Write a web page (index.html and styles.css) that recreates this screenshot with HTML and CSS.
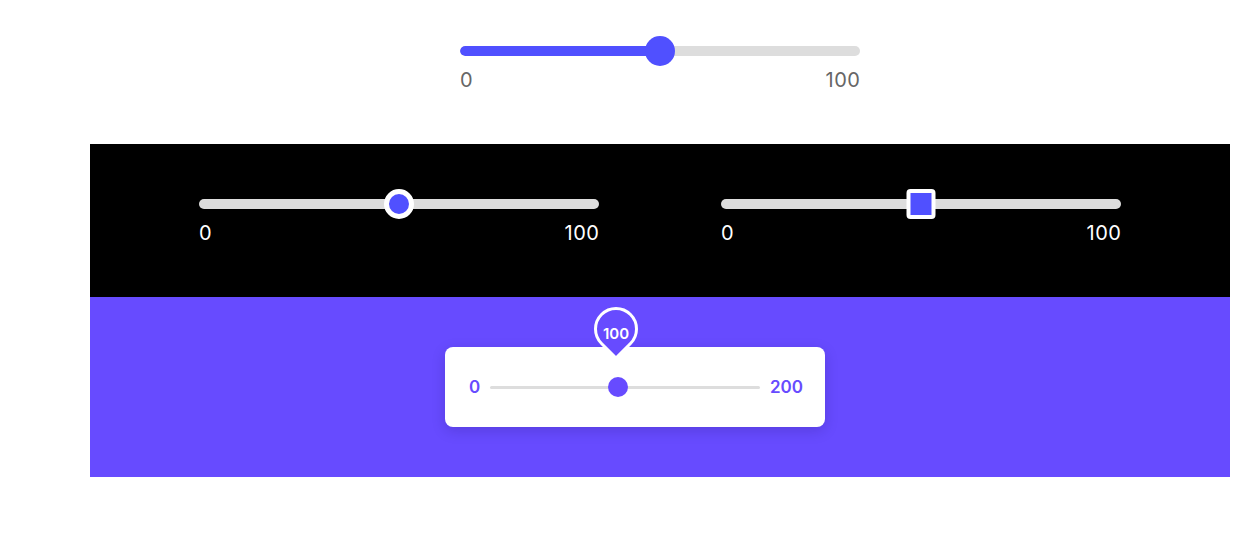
FILE: index.html
```html
<!DOCTYPE html>
<html lang="en">
<head>
<meta charset="utf-8">
<title>Range sliders</title>
<link rel="stylesheet" href="styles.css">
</head>
<body>
<main class="page">
  <section class="top">
    <div class="range">
      <div class="slider">
        <div class="track"><div class="fill" style="width:50%"></div></div>
        <span class="thumb thumb-solid" style="left:50%"></span>
      </div>
      <div class="labels labels-gray"><span>0</span><span>100</span></div>
    </div>
  </section>

  <section class="dark">
    <div class="range">
      <div class="slider">
        <div class="track"></div>
        <span class="thumb thumb-ring" style="left:50%"></span>
      </div>
      <div class="labels labels-white"><span>0</span><span>100</span></div>
    </div>
    <div class="range">
      <div class="slider">
        <div class="track"></div>
        <span class="thumb thumb-square" style="left:50%"></span>
      </div>
      <div class="labels labels-white"><span>0</span><span>100</span></div>
    </div>
  </section>

  <section class="purple">
    <div class="card">
      <span class="card-label">0</span>
      <div class="card-track">
        <span class="card-thumb" style="left:47.4%">
          <span class="pin"></span>
          <span class="pin-text">100</span>
        </span>
      </div>
      <span class="card-label">200</span>
    </div>
  </section>
</main>
</body>
</html>
```

FILE: styles.css
```css
html, body {
  margin: 0;
  padding: 0;
  background: #ffffff;
}

body {
  font-family: Inter, "Open Sans", sans-serif;
  width: 1260px;
  height: 536px;
  overflow: hidden;
}

.page {
  display: flex;
  flex-direction: column;
}

.top {
  height: 144px;
  box-sizing: border-box;
  padding: 36px 0 0 460px;
}

.range {
  width: 400px;
  display: flex;
  flex-direction: column;
}

.slider {
  position: relative;
  height: 30px;
  display: flex;
  align-items: center;
}

.track {
  position: relative;
  width: 100%;
  height: 10px;
  border-radius: 5px;
  background: #dddddd;
  overflow: hidden;
}

.fill {
  height: 100%;
  background: #5050ff;
  border-radius: 5px 0 0 5px;
}

.thumb {
  position: absolute;
  top: 0;
  width: 30px;
  height: 30px;
  box-sizing: border-box;
  transform: translateX(-50%);
  background: #5050ff;
}

.thumb-solid {
  border-radius: 50%;
}

.thumb-ring {
  border-radius: 50%;
  border: 5px solid #ffffff;
}

.thumb-square {
  width: 29px;
  border-radius: 4px;
  border: 4.5px solid #ffffff;
}

.labels {
  display: flex;
  justify-content: space-between;
  margin-top: 4px;
  font-size: 20px;
  line-height: 20px;
  font-weight: 400;
  letter-spacing: 0.6px;
}

.labels span:last-child {
  margin-right: -0.6px;
}

.labels-gray {
  color: #666666;
}

.labels-white {
  color: #ffffff;
}

.dark {
  margin-left: 90px;
  width: 1140px;
  height: 153px;
  box-sizing: border-box;
  background: #000000;
  padding-top: 45px;
  display: flex;
  justify-content: center;
  align-items: flex-start;
  gap: 122px;
}

.purple {
  margin-left: 90px;
  width: 1140px;
  height: 180px;
  box-sizing: border-box;
  background: #674bff;
  padding: 50px 0 0 355px;
}

.card {
  width: 380px;
  height: 80px;
  box-sizing: border-box;
  background: #ffffff;
  border-radius: 8px;
  box-shadow: 0 4px 14px rgba(20, 10, 80, 0.18);
  display: flex;
  align-items: center;
  padding: 0 22px 0 24px;
  gap: 10px;
}

.card-label {
  color: #674bff;
  font-size: 17px;
  line-height: 20px;
  font-weight: 600;
}

.card-track {
  position: relative;
  flex: 1;
  height: 3px;
  border-radius: 2px;
  background: #dddddd;
}

.card-thumb {
  position: absolute;
  top: -8.5px;
  width: 20px;
  height: 20px;
  margin-left: -10px;
  border-radius: 50%;
  background: #674bff;
}

.pin {
  position: absolute;
  left: -14px;
  top: -70px;
  width: 44px;
  height: 44px;
  box-sizing: border-box;
  border: 3px solid #ffffff;
  border-radius: 50% 50% 0 50%;
  background: #674bff;
  transform: rotate(45deg);
}

.pin-text {
  position: absolute;
  left: -14px;
  top: -70px;
  width: 44px;
  height: 44px;
  display: flex;
  align-items: center;
  justify-content: center;
  color: #ffffff;
  font-size: 15px;
  font-weight: 600;
  padding-top: 9px;
  box-sizing: border-box;
}
```
